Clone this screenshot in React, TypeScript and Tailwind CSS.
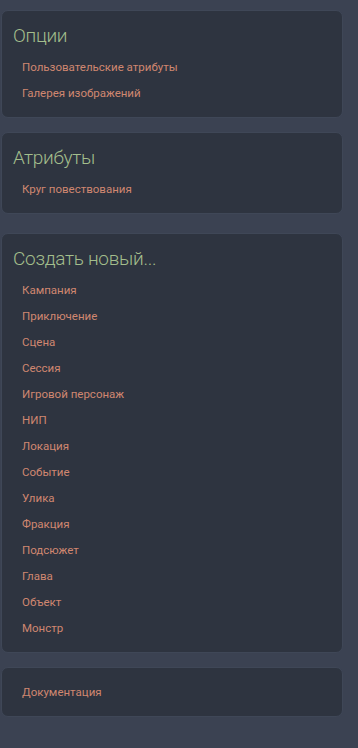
const sections = [
  {
    title: "Опции",
    items: ["Пользовательские атрибуты", "Галерея изображений"],
  },
  {
    title: "Атрибуты",
    items: ["Круг повествования"],
  },
  {
    title: "Создать новый...",
    items: [
      "Кампания",
      "Приключение",
      "Сцена",
      "Сессия",
      "Игровой персонаж",
      "НИП",
      "Локация",
      "Событие",
      "Улика",
      "Фракция",
      "Подсюжет",
      "Глава",
      "Объект",
      "Монстр",
    ],
  },
]

const Card = ({ title, items, className }: { title?: string; items: string[]; className?: string }) => {
  return (
    <div
      className={`ml-px w-[342px] rounded-[7px] border border-[#3f4757] bg-[#2e3440] px-[11px] pb-[10px] ${
        title ? "pt-[11px]" : "pt-3"
      } ${className ?? ""}`}
    >
      {title && (
        <h2 className="mb-[5px] h-[28px] text-[19px] font-light leading-[28px] tracking-[-0.3px] text-[#a3be8c]">
          {title}
        </h2>
      )}
      <ul>
        {items.map((item) => (
          <li key={item} className="flex h-[26px] items-center pl-[9px]">
            <a className="cursor-pointer text-[11.5px] text-[#d08770]">{item}</a>
          </li>
        ))}
      </ul>
    </div>
  )
}

export default function App() {
  return (
    <div
      className="min-h-[748px] w-[358px] bg-[#3b4252] pt-[10px]"
      style={{ fontFamily: 'Roboto, "Noto Sans", sans-serif' }}
    >
      <Card title={sections[0].title} items={sections[0].items} />
      <Card title={sections[1].title} items={sections[1].items} className="mt-[14px]" />
      <Card title={sections[2].title} items={sections[2].items} className="mt-[19px]" />
      <Card items={["Документация"]} className="mt-[14px]" />
    </div>
  )
}
